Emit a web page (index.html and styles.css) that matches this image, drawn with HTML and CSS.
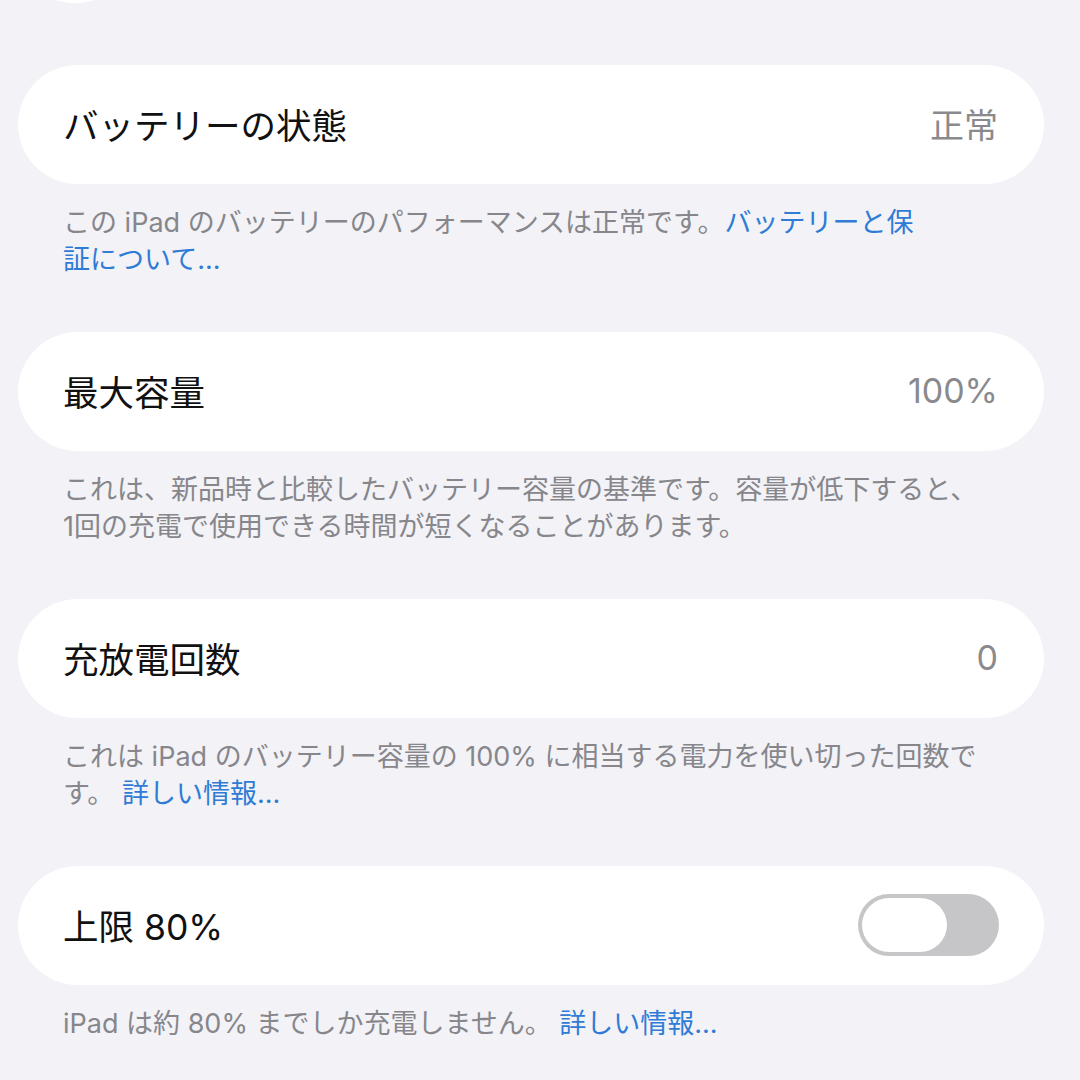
FILE: index.html
```html
<!DOCTYPE html>
<html lang="ja">
<head>
<meta charset="utf-8">
<title>バッテリー</title>
<link rel="stylesheet" href="styles.css">
</head>
<body>
<div class="page">
  <div class="top-knob"></div>

  <section class="group">
    <div class="card">
      <span class="title">バッテリーの状態</span>
      <span class="value">正常</span>
    </div>
    <p class="footer">この iPad のバッテリーのパフォーマンスは正常です。<a class="link">バッテリーと保<br>証について...</a></p>
  </section>

  <section class="group">
    <div class="card">
      <span class="title">最大容量</span>
      <span class="value">100%</span>
    </div>
    <p class="footer">これは、新品時と比較したバッテリー容量の基準です。容量が低下すると、<br>1回の充電で使用できる時間が短くなることがあります。</p>
  </section>

  <section class="group">
    <div class="card">
      <span class="title">充放電回数</span>
      <span class="value">0</span>
    </div>
    <p class="footer">これは iPad のバッテリー容量の 100% に相当する電力を使い切った回数で<br>す。 <a class="link">詳しい情報...</a></p>
  </section>

  <section class="group">
    <div class="card">
      <span class="title">上限 80%</span>
      <span class="toggle"><span class="knob"></span></span>
    </div>
    <p class="footer">iPad は約 80% までしか充電しません。 <a class="link">詳しい情報...</a></p>
  </section>
</div>
</body>
</html>
```
FILE: styles.css
```css
html, body {
  margin: 0;
  padding: 0;
  background: #f2f2f7;
}
body {
  font-family: "Inter", "Noto Sans CJK JP", sans-serif;
  width: 1080px;
  height: 1080px;
  overflow: hidden;
}
.page {
  position: relative;
  padding: 65px 36px 0 18px;
  display: flex;
  flex-direction: column;
}
.top-knob {
  position: absolute;
  left: 7px;
  top: -133px;
  width: 136px;
  height: 136px;
  border-radius: 50%;
  background: #ffffff;
}
.group {
  display: flex;
  flex-direction: column;
  margin-bottom: 54px;
}
.card {
  height: 119px;
  background: #ffffff;
  border-radius: 60px;
  display: flex;
  align-items: center;
  justify-content: space-between;
  padding: 0 46px 2px 45px;
  box-sizing: border-box;
}
.title {
  font-size: 35.5px;
  color: #111111;
  font-weight: 400;
}
.value {
  font-size: 34px;
  color: #8a8a8e;
}
.value-num {
  font-size: 35px;
}
.footer {
  margin: 0;
  padding: 20px 45px 0 45px;
  font-size: 27px;
  line-height: 37px;
  color: #86868b;
  white-space: nowrap;
}
.link {
  color: #2f7bd6;
}
.toggle {
  width: 141px;
  height: 62px;
  border-radius: 31px;
  background: #c6c6c8;
  display: flex;
  align-items: center;
  padding: 0 4px;
  box-sizing: border-box;
  margin-right: -1px;
}
.knob {
  width: 85px;
  height: 54px;
  border-radius: 27px;
  background: #ffffff;
}
```
